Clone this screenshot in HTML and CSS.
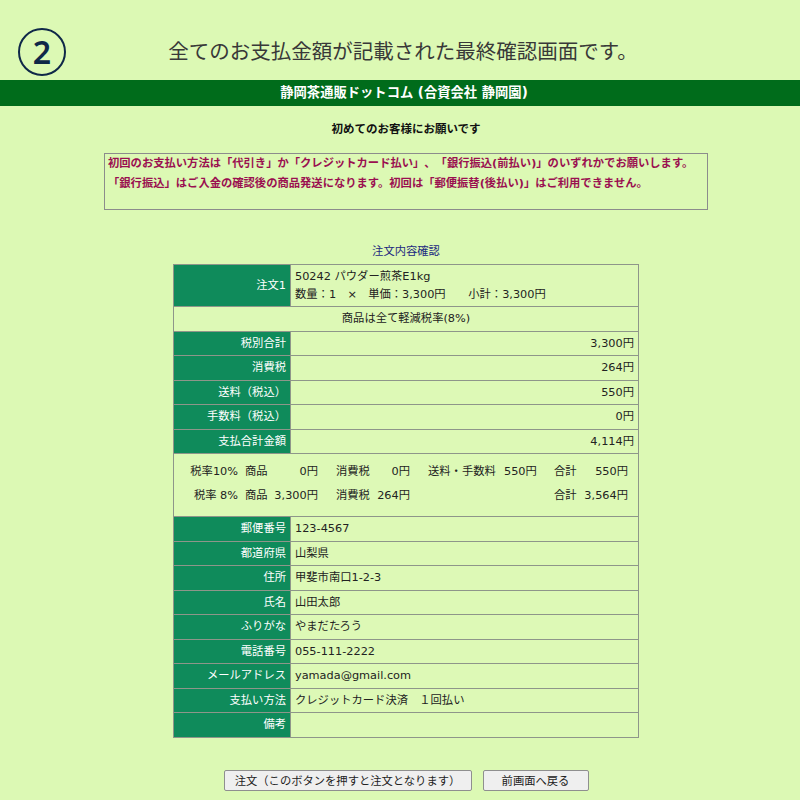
FILE: index.html
```html
<!DOCTYPE html>
<html lang="ja">
<head>
<meta charset="utf-8">
<title>最終確認画面</title>
<link rel="stylesheet" href="styles.css">
</head>
<body>
<div class="titlebar">
  <div class="circle-wrap"><span class="circle-num">2</span></div>
  <h1 class="title">全てのお支払金額が記載された最終確認画面です。</h1>
  <div></div>
</div>
<div class="shopbar">静岡茶通販ドットコム (合資会社 静岡園)</div>
<div class="content">
  <p class="lead">初めてのお客様にお願いです</p>
  <div class="notice">初回のお支払い方法は「代引き」か「クレジットカード払い」、「銀行振込(前払い)」のいずれかでお願いします。<br>「銀行振込」はご入金の確認後の商品発送になります。初回は「郵便振替(後払い)」はご利用できません。</div>
  <p class="caption">注文内容確認</p>
  <table class="order">
    <tr><th>注文1</th><td>50242 パウダー煎茶E1kg<br>数量：1　×　単価：3,300円　　小計：3,300円</td></tr>
    <tr><td colspan="2" class="center">商品は全て軽減税率(8%)</td></tr>
    <tr><th>税別合計</th><td class="num">3,300円</td></tr>
    <tr><th>消費税</th><td class="num">264円</td></tr>
    <tr><th>送料（税込）</th><td class="num">550円</td></tr>
    <tr><th>手数料（税込）</th><td class="num">0円</td></tr>
    <tr><th>支払合計金額</th><td class="num">4,114円</td></tr>
    <tr><td colspan="2" class="breakdown">
      <div class="taxgrid">
        <span class="r">税率10%</span><span class="p7">商品</span><span class="r">0円</span><span class="p18">消費税</span><span class="r">0円</span><span class="p18">送料・手数料</span><span class="p4">550円</span><span class="p14">合計</span><span class="r">550円</span>
        <span class="r">税率 8%</span><span class="p7">商品</span><span class="r">3,300円</span><span class="p18">消費税</span><span class="r">264円</span><span></span><span></span><span class="p14">合計</span><span class="r">3,564円</span>
      </div>
    </td></tr>
    <tr><th>郵便番号</th><td>123-4567</td></tr>
    <tr><th>都道府県</th><td>山梨県</td></tr>
    <tr><th>住所</th><td>甲斐市南口1-2-3</td></tr>
    <tr><th>氏名</th><td>山田太郎</td></tr>
    <tr><th>ふりがな</th><td>やまだたろう</td></tr>
    <tr><th>電話番号</th><td>055-111-2222</td></tr>
    <tr><th>メールアドレス</th><td>yamada@gmail.com</td></tr>
    <tr><th>支払い方法</th><td>クレジットカード決済　１回払い</td></tr>
    <tr><th>備考</th><td></td></tr>
  </table>
  <div class="buttons">
    <button class="btn btn-order" type="button">注文（このボタンを押すと注文となります）</button>
    <button class="btn btn-back" type="button">前画面へ戻る</button>
  </div>
</div>
</body>
</html>
```

FILE: styles.css
```css
html, body {
  margin: 0;
  padding: 0;
  background: #dcf9b4;
  font-family: "DejaVu Sans", "Noto Sans CJK JP", sans-serif;
  color: #222;
  text-spacing-trim: space-all;
}

.titlebar {
  display: grid;
  grid-template-columns: 1fr auto 1fr;
  align-items: center;
  padding: 28px 0 4px 6px;
  height: 48px;
}

.circle-wrap {
  display: flex;
}

.circle-num {
  margin-left: 12px;
  width: 44px;
  border: 2px solid #0f2848;
  border-radius: 50%;
  display: flex;
  align-items: center;
  justify-content: center;
  font-family: "Noto Sans", sans-serif;
  font-size: 32px;
  font-weight: 600;
  line-height: 1;
  color: #0f2848;
  padding-bottom: 1px;
  box-sizing: content-box;
  height: 43px;
}

.title {
  margin: 0;
  font-family: "Noto Sans CJK JP", sans-serif;
  font-size: 20.5px;
  font-weight: normal;
  color: #383838;
  line-height: 30px;
  padding-bottom: 4px;
  white-space: nowrap;
}

.shopbar {
  background: #006c1b;
  color: #fff;
  font-weight: bold;
  font-size: 13.3px;
  height: 26px;
  line-height: 26px;
  text-align: center;
  padding-left: 8px;
}

.content {
  padding-left: 12px;
  display: flex;
  flex-direction: column;
  align-items: center;
}

.lead {
  margin: 15px 0 0;
  font-size: 11.5px;
  font-weight: bold;
  line-height: 17px;
  color: #111;
}

.notice {
  margin-top: 15px;
  width: 596px;
  height: 40px;
  padding: 0 3px 15px;
  border: 1px solid #8c8c8c;
  color: #9a1050;
  font-weight: bold;
  font-size: 11.3px;
  line-height: 20px;
  white-space: nowrap;
}

.caption {
  margin: 33px 0 4px;
  font-size: 11.3px;
  line-height: 17px;
  color: #1d2a80;
}

.order {
  border-collapse: collapse;
  width: 466px;
  font-size: 11.3px;
  line-height: 17.5px;
}

.order th, .order td {
  border: 1px solid #8e968a;
  padding: 3px 4px;
}

.order th {
  width: 108px;
  background: #0f8b5b;
  color: #fff;
  font-weight: normal;
  text-align: right;
  white-space: nowrap;
}

.order td {
  text-align: left;
  background: #ddf9b6;
  white-space: nowrap;
}

.order td.num {
  text-align: right;
}

.order td.center {
  text-align: center;
}

.order td.breakdown {
  padding: 6px 10px 8px;
}

.taxgrid {
  display: grid;
  grid-template-columns: 54px 32px 48px 56px 36px 90px 40px 40px 48px;
  line-height: 24px;
}

.taxgrid .r { text-align: right; }
.taxgrid .p4 { padding-left: 4px; }
.taxgrid .p7 { padding-left: 7px; }
.taxgrid .p14 { padding-left: 14px; }
.taxgrid .p18 { padding-left: 18px; }

.buttons {
  margin-top: 32px;
  display: flex;
  gap: 11px;
}

.btn {
  height: 21px;
  padding: 0;
  background: #efefef;
  border: 1px solid #8f8f8f;
  border-radius: 2px;
  font-family: "Noto Sans CJK JP", sans-serif;
  font-size: 11.3px;
  color: #222;
  line-height: 19px;
  text-spacing-trim: space-all;
}

.btn-order { width: 248px; }
.btn-back { width: 106px; }
```
